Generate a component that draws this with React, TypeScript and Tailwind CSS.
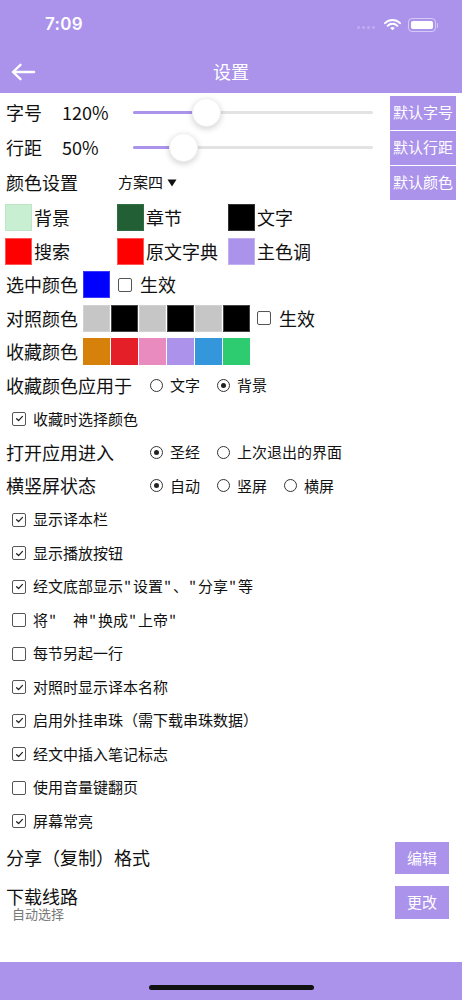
import React from 'react';

const FONT = { fontFamily: '"Noto Sans CJK SC", "Noto Sans", sans-serif' };

/** 复选框 */
function Check({ on }: { on: boolean }) {
    return (
        <span className="w-[14px] h-[14px] border border-[#555] rounded-[2px] flex items-center justify-center bg-white shrink-0">
            {on && (
                <svg viewBox="0 0 10 10" className="w-[9px] h-[9px]">
                    <path d="M1.8 5.2 L4 7.3 L8.3 2.6" fill="none" stroke="#222" strokeWidth="1.4" strokeLinecap="round" strokeLinejoin="round" />
                </svg>
            )}
        </span>
    );
}

/** 单选框 */
function Radio({ on }: { on: boolean }) {
    return (
        <span className="w-[13px] h-[13px] border border-[#333] rounded-full flex items-center justify-center shrink-0">
            {on && <span className="w-[5px] h-[5px] rounded-full bg-[#222]" />}
        </span>
    );
}

/** 滑杆 */
function Slider({ pos }: { pos: number }) {
    return (
        <div className="relative w-[240px] h-[35px] flex items-center">
            <div className="w-full h-[3px] rounded-full bg-[#e3e3e3]" />
            <div className="absolute left-0 h-[3px] rounded-full bg-[#ab92eb]" style={{ width: pos }} />
            <div
                className="absolute w-[29px] h-[29px] rounded-full bg-white shadow-[0_2px_6px_rgba(0,0,0,0.18)] border border-[#f0f0f0]"
                style={{ left: pos - 14 }}
            />
        </div>
    );
}

function PurpleBtn({ text, w, h }: { text: string; w: string; h: string }) {
    return (
        <button className={`${w} ${h} bg-[#ab92eb] text-white text-[15px] flex items-center justify-center shrink-0`}>
            {text}
        </button>
    );
}

function Swatch({ color, border }: { color: string; border?: string }) {
    return <span className="w-[27px] h-[27px] shrink-0 border" style={{ backgroundColor: color, borderColor: border || color }} />;
}

/** 把文本中的引号换成窄一点的引号块 */
function Quoted({ text }: { text: string }) {
    const parts = text.split('"');
    return (
        <>
            {parts.map((p, i) => (
                <React.Fragment key={i}>
                    {i > 0 && <span className="inline-block w-[10px] pl-[1px]">"</span>}
                    {p}
                </React.Fragment>
            ))}
        </>
    );
}

const COLOR_CELLS = [
    [
        { c: '#c9efd2', b: '#bde6c6', t: '背景' },
        { c: '#225f35', b: '#2f6e43', t: '章节' },
        { c: '#000000', b: '#333', t: '文字' },
    ],
    [
        { c: '#ff0000', b: '#f55', t: '搜索' },
        { c: '#ff0000', b: '#f55', t: '原文字典' },
        { c: '#ab92eb', b: '#c3b0f0', t: '主色调' },
    ],
];

const COMPARE = ['#c6c6c6', '#000000', '#c6c6c6', '#000000', '#c6c6c6', '#000000'];
const FAV = ['#d6820a', '#e41f27', '#e98bbf', '#ad92ec', '#3597db', '#2ecc71'];

const CHECKS = [
    { t: '显示译本栏', on: true },
    { t: '显示播放按钮', on: true },
    { t: '经文底部显示"设置"、"分享"等', on: true },
    { t: '将"\u3000神"换成"上帝"', on: false },
    { t: '每节另起一行', on: false },
    { t: '对照时显示译本名称', on: true },
    { t: '启用外挂串珠（需下载串珠数据）', on: true },
    { t: '经文中插入笔记标志', on: true },
    { t: '使用音量键翻页', on: false },
    { t: '屏幕常亮', on: true },
];

function RadioRow({ label, opts, sel }: { label: string; opts: string[]; sel: number }) {
    return (
        <div className="h-[33.6px] flex items-center pl-[6px]">
            <span className="w-[144px] text-[18px]">{label}</span>
            {opts.map((o, i) => (
                <span key={o} className="w-[67px] flex items-center whitespace-nowrap">
                    <Radio on={i === sel} />
                    <span className="ml-[7px] text-[15px]">{o}</span>
                </span>
            ))}
        </div>
    );
}

function CheckRow({ t, on }: { t: string; on: boolean }) {
    return (
        <div className="h-[33.5px] flex items-center pl-[12px]">
            <Check on={on} />
            <span className="ml-[7px] text-[15px] whitespace-pre">
                <Quoted text={t} />
            </span>
        </div>
    );
}

export default function App() {
    return (
        <div className="w-[462px] h-[1000px] flex flex-col bg-white text-[#111]" style={FONT}>
            {/* 顶部状态栏 + 导航 */}
            <div className="bg-[#ab92eb] text-white">
                <div className="h-[50px] flex items-center justify-between pl-[45px] pr-[24px]">
                    <span className="text-[17px] font-semibold tracking-[0.3px]" style={{ fontFamily: 'Inter, sans-serif' }}>7:09</span>
                    <div className="flex items-center">
                        <div className="flex gap-[2px] mr-[9px] mt-[4px]">
                            {[0, 1, 2, 3].map(i => (
                                <span key={i} className="w-[3px] h-[3px] rounded-full bg-white/25" />
                            ))}
                        </div>
                        <svg viewBox="0 0 17 12" className="w-[17px] h-[12px] mr-[7px]">
                            <path d="M1 4.2 A10.5 10.5 0 0 1 16 4.2" fill="none" stroke="white" strokeWidth="1.9" strokeLinecap="round" />
                            <path d="M3.6 6.8 A6.8 6.8 0 0 1 13.4 6.8" fill="none" stroke="white" strokeWidth="1.9" strokeLinecap="round" />
                            <path d="M8.5 11.3 L6.2 9.1 A3.3 3.3 0 0 1 10.8 9.1 Z" fill="white" />
                        </svg>
                        <div className="flex items-center">
                            <span className="w-[28px] h-[14px] rounded-[4px] border border-white/50 p-[2px] flex">
                                <span className="flex-1 bg-white rounded-[2px]" />
                            </span>
                            <span className="w-[1.5px] h-[5px] ml-[1px] rounded-r bg-white/50" />
                        </div>
                    </div>
                </div>
                <div className="h-[43px] relative flex items-center justify-center">
                    <svg viewBox="0 0 26 18" className="absolute left-[10px] w-[26px] h-[18px]">
                        <path d="M24 9 H3 M10.5 1.8 L3 9 L10.5 16.2" fill="none" stroke="white" strokeWidth="2.4" strokeLinecap="round" strokeLinejoin="round" />
                    </svg>
                    <span className="text-[18px]">设置</span>
                </div>
            </div>

            {/* 字号 / 行距 / 颜色设置 */}
            <div className="pt-[2px]">
                <div className="h-[35px] flex items-center pl-[6px] pr-[6px]">
                    <span className="w-[56px] text-[18px]">字号</span>
                    <span className="w-[71px] text-[18px]">120%</span>
                    <Slider pos={73} />
                    <div className="ml-auto"><PurpleBtn text="默认字号" w="w-[66px]" h="h-[34px]" /></div>
                </div>
                <div className="h-[35px] flex items-center pl-[6px] pr-[6px]">
                    <span className="w-[56px] text-[18px]">行距</span>
                    <span className="w-[71px] text-[18px]">50%</span>
                    <Slider pos={50} />
                    <div className="ml-auto"><PurpleBtn text="默认行距" w="w-[66px]" h="h-[34px]" /></div>
                </div>
                <div className="h-[35px] flex items-center pl-[6px] pr-[6px]">
                    <span className="w-[112px] text-[18px]">颜色设置</span>
                    <span className="text-[15px] flex items-center">
                        方案四
                        <svg viewBox="0 0 10 8" className="w-[10px] h-[8px] ml-[4px]">
                            <path d="M0.5 0.5 H9.5 L5 7.5 Z" fill="#111" />
                        </svg>
                    </span>
                    <div className="ml-auto"><PurpleBtn text="默认颜色" w="w-[66px]" h="h-[34px]" /></div>
                </div>
            </div>

            {/* 颜色块 */}
            <div className="pt-[1px]">
                {COLOR_CELLS.map((row, ri) => (
                    <div key={ri} className="h-[33.5px] flex items-center pl-[5px]">
                        {row.map((cell, ci) => (
                            <div key={ci} className={`flex items-center ${ci === 0 ? 'w-[112px]' : 'w-[111px]'}`}>
                                <Swatch color={cell.c} border={cell.b} />
                                <span className="ml-[2px] text-[18px]">{cell.t}</span>
                            </div>
                        ))}
                    </div>
                ))}
                <div className="h-[33.5px] flex items-center pl-[6px]">
                    <span className="w-[77px] text-[18px]">选中颜色</span>
                    <Swatch color="#0000ff" border="#3a3aff" />
                    <span className="ml-[8px]"><Check on={false} /></span>
                    <span className="ml-[8px] text-[18px]">生效</span>
                </div>
                <div className="h-[33.5px] flex items-center pl-[6px]">
                    <span className="w-[77px] text-[18px]">对照颜色</span>
                    <div className="flex gap-[1px]">
                        {COMPARE.map((c, i) => (
                            <Swatch key={i} color={c} border={c === '#000000' ? '#444' : '#d2d2d2'} />
                        ))}
                    </div>
                    <span className="ml-[7px]"><Check on={false} /></span>
                    <span className="ml-[8px] text-[18px]">生效</span>
                </div>
                <div className="h-[33.5px] flex items-center pl-[6px]">
                    <span className="w-[77px] text-[18px]">收藏颜色</span>
                    <div className="flex gap-[1px]">
                        {FAV.map((c, i) => (
                            <Swatch key={i} color={c} />
                        ))}
                    </div>
                </div>
            </div>

            {/* 单选 / 复选 */}
            <div>
                <RadioRow label="收藏颜色应用于" opts={['文字', '背景']} sel={1} />
                <CheckRow t="收藏时选择颜色" on={true} />
                <RadioRow label="打开应用进入" opts={['圣经', '上次退出的界面']} sel={0} />
                <RadioRow label="横竖屏状态" opts={['自动', '竖屏', '横屏']} sel={0} />
                {CHECKS.map(c => (
                    <CheckRow key={c.t} t={c.t} on={c.on} />
                ))}
            </div>

            {/* 分享格式 / 下载线路 */}
            <div className="pt-[4px] pr-[13px]">
                <div className="h-[32px] flex items-center justify-between pl-[6px]">
                    <span className="text-[18px]">分享（复制）格式</span>
                    <PurpleBtn text="编辑" w="w-[54px]" h="h-[32px]" />
                </div>
                <div className="mt-[12px] flex justify-between pl-[6px]">
                    <div className="flex flex-col">
                        <span className="text-[18px] leading-[20px]">下载线路</span>
                        <span className="text-[13px] leading-[16px] text-[#777] pl-[6px]">自动选择</span>
                    </div>
                    <PurpleBtn text="更改" w="w-[54px]" h="h-[33px]" />
                </div>
            </div>

            <div className="flex-1" />

            {/* 底部栏 */}
            <div className="h-[38px] bg-[#ab92eb] flex items-end justify-center pb-[10px]">
                <span className="w-[165px] h-[5px] rounded-full bg-[#111]" />
            </div>
        </div>
    );
}
